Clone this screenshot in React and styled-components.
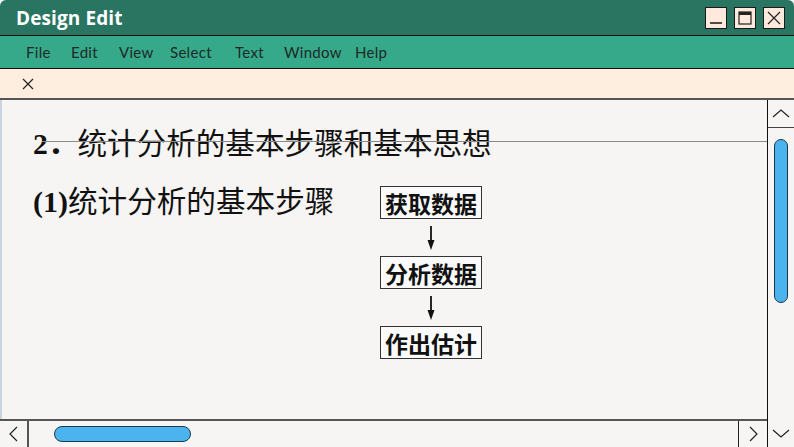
import React from "react";
import styled, { createGlobalStyle } from "styled-components";

const Global = createGlobalStyle`
  html, body { margin: 0; padding: 0; background: #f6f5f3; }
  body { width: 794px; height: 447px; overflow: hidden; }
`;

const Window = styled.div`
  width: 794px;
  height: 447px;
  display: flex;
  flex-direction: column;
  background: #f6f5f3;
  overflow: hidden;
  border-top-left-radius: 6px;
  border-top-right-radius: 6px;
`;

const TitleBar = styled.div`
  height: 35px;
  background: #2a7561;
  border-bottom: 1px solid #111;
  display: flex;
  align-items: center;
  justify-content: space-between;
  padding: 0 9px 0 16px;
  h1 {
    margin: 0;
    font: 700 19px "Open Sans", "Lato", sans-serif;
    color: #fff;
    letter-spacing: 0.1px;
  }
`;

const Controls = styled.div`
  display: flex;
  gap: 7px;
`;

const CtrlButton = styled.div`
  width: 20px;
  height: 20px;
  background: #fdeadc;
  border: 1px solid #1a1a1a;
  display: flex;
  align-items: center;
  justify-content: center;
`;

const MenuBar = styled.div`
  height: 32px;
  background: #36a98b;
  border-bottom: 1px solid #111;
  display: flex;
  align-items: center;
  padding-left: 26px;
`;

const MenuItem = styled.span`
  width: ${(p) => p.w}px;
  font: 400 15px "Lato", "Open Sans", sans-serif;
  color: #1d2a26;
  letter-spacing: 0.3px;
`;

const TabBar = styled.div`
  height: 29px;
  background: #fdeedf;
  border-bottom: 2px solid #555;
  display: flex;
  align-items: center;
  padding-left: 21px;
`;

const Main = styled.div`
  flex: 1;
  display: flex;
  min-height: 0;
`;

const LeftCol = styled.div`
  flex: 1;
  display: flex;
  flex-direction: column;
  min-width: 0;
`;

const Content = styled.div`
  flex: 1;
  position: relative;
  padding: 24px 0 0 33px;
  border-left: 2px solid #c8d3e0;
  &::after {
    content: "";
    position: absolute;
    left: 40px;
    right: 0;
    top: 41px;
    height: 1px;
    background: #8a8a8a;
  }
`;

const Heading = styled.div`
  font: 400 29.6px "Liberation Serif", "Noto Sans CJK SC", serif;
  color: #111;
  line-height: 40px;
  margin-left: -2px;
  b { font-weight: 700; }
`;

const Row = styled.div`
  display: flex;
  margin-top: 19px;
`;

const Label = styled.div`
  width: 347px;
  font: 400 29.6px "Liberation Serif", "Noto Sans CJK SC", serif;
  color: #111;
  line-height: 36px;
  margin-top: 1px;
  margin-left: -2px;
  b { font-weight: 700; font-size: 30px; }
`;

const Flow = styled.div`
  display: flex;
  flex-direction: column;
  align-items: center;
  width: 102px;
  margin-top: 3px;
`;

const Step = styled.div`
  width: 100px;
  height: 31px;
  border: 1px solid #333;
  background: #fafafa;
  display: flex;
  align-items: center;
  justify-content: center;
  font: 700 23px "Noto Sans CJK SC", sans-serif;
  color: #111;
`;

const ArrowWrap = styled.div`
  height: 37px;
  display: flex;
  align-items: center;
  justify-content: center;
`;

const HScroll = styled.div`
  height: 26px;
  border-top: 2px solid #555;
  display: flex;
  align-items: stretch;
`;

const ScrollBtn = styled.div`
  width: ${(p) => p.w || 27}px;
  display: flex;
  align-items: center;
  justify-content: center;
  border-left: ${(p) => (p.bl ? "1px solid #222" : "none")};
  border-right: ${(p) => (p.br ? "2px solid #555" : "none")};
`;

const HTrack = styled.div`
  flex: 1;
  display: flex;
  align-items: center;
  padding-left: 25px;
`;

const HThumb = styled.div`
  width: 135px;
  height: 14px;
  background: #4bb4ee;
  border: 1px solid #1e3a4a;
  border-radius: 8px;
`;

const VScroll = styled.div`
  width: 26px;
  border-left: 1px solid #111;
  display: flex;
  flex-direction: column;
`;

const VBtn = styled.div`
  height: ${(p) => p.h}px;
  display: flex;
  align-items: center;
  justify-content: center;
  border-bottom: ${(p) => (p.bb ? "1px solid #444" : "none")};
`;

const VTrack = styled.div`
  flex: 1;
  display: flex;
  justify-content: center;
  padding-top: 11px;
`;

const VThumb = styled.div`
  width: 12px;
  height: 162px;
  background: #4bb4ee;
  border: 1px solid #1e3a4a;
  border-radius: 7px;
`;

const Chevron = ({ d, w = 18, h = 18 }) => (
  <svg width={w} height={h} viewBox="0 0 18 18">
    <path d={d} fill="none" stroke="#222" strokeWidth="1.2" />
  </svg>
);

const Arrow = () => (
  <svg width="10" height="26" viewBox="0 0 10 26">
    <line x1="5" y1="1" x2="5" y2="20" stroke="#111" strokeWidth="1.8" />
    <path d="M1.5 15 L5 25 L8.5 15 Z" fill="#111" />
  </svg>
);

const menus = [
  ["File", 45],
  ["Edit", 48],
  ["View", 51],
  ["Select", 65],
  ["Text", 49],
  ["Window", 71],
  ["Help", 40],
];

const steps = ["获取数据", "分析数据", "作出估计"];

export default function App() {
  return (
    <>
      <Global />
      <Window>
        <TitleBar>
          <h1>Design Edit</h1>
          <Controls>
            <CtrlButton>
              <svg width="16" height="16" viewBox="0 0 16 16">
                <line x1="2" y1="13" x2="14" y2="13" stroke="#222" strokeWidth="1.6" />
              </svg>
            </CtrlButton>
            <CtrlButton>
              <svg width="16" height="16" viewBox="0 0 16 16">
                <rect x="2" y="2" width="12" height="12" fill="none" stroke="#222" strokeWidth="1.2" />
                <rect x="2" y="2" width="12" height="3" fill="#222" />
              </svg>
            </CtrlButton>
            <CtrlButton>
              <svg width="16" height="16" viewBox="0 0 16 16">
                <path d="M2 2 L14 14 M14 2 L2 14" stroke="#222" strokeWidth="1.2" />
              </svg>
            </CtrlButton>
          </Controls>
        </TitleBar>
        <MenuBar>
          {menus.map(([m, w]) => (
            <MenuItem key={m} w={w}>
              {m}
            </MenuItem>
          ))}
        </MenuBar>
        <TabBar>
          <svg width="14" height="14" viewBox="0 0 14 14">
            <path d="M2 2 L12 12 M12 2 L2 12" stroke="#222" strokeWidth="1.2" />
          </svg>
        </TabBar>
        <Main>
          <LeftCol>
            <Content>
              <Heading>
                <b>2．</b>统计分析的基本步骤和基本思想
              </Heading>
              <Row>
                <Label>
                  <b>(1)</b>统计分析的基本步骤
                </Label>
                <Flow>
                  {steps.map((s, i) => (
                    <React.Fragment key={s}>
                      {i > 0 && (
                        <ArrowWrap>
                          <Arrow />
                        </ArrowWrap>
                      )}
                      <Step>{s}</Step>
                    </React.Fragment>
                  ))}
                </Flow>
              </Row>
            </Content>
            <HScroll>
              <ScrollBtn br>
                <Chevron d="M12 2 L5 9 L12 16" />
              </ScrollBtn>
              <HTrack>
                <HThumb />
              </HTrack>
              <ScrollBtn w={28} bl>
                <Chevron d="M6 2 L13 9 L6 16" />
              </ScrollBtn>
            </HScroll>
          </LeftCol>
          <VScroll>
            <VBtn h={27} bb>
              <Chevron d="M1 12 L9 5 L17 12" />
            </VBtn>
            <VTrack>
              <VThumb />
            </VTrack>
            <VBtn h={28}>
              <Chevron d="M1 6 L9 13 L17 6" />
            </VBtn>
          </VScroll>
        </Main>
      </Window>
    </>
  );
}
